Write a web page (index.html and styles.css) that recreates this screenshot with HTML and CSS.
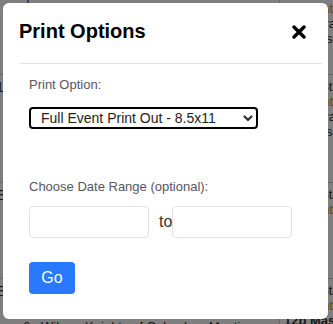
FILE: index.html
```html
<!DOCTYPE html>
<html lang="en">
<head>
  <meta charset="UTF-8">
  <title>Print Options</title>
  <link rel="stylesheet" href="styles.css">
</head>
<body>
  <div class="calendar">
    <div class="week first">
      <div class="day">
        <p class="event">12p Mass Intentions</p>
      </div>
      <div class="day side">
        <p class="event">6:30a Sta Prayer</p>
        <p class="event link">Mass Intentions</p>
        <p class="event">9a Adoration</p>
        <p class="event">12p Rosary</p>
      </div>
    </div>
    <div class="week">
      <div class="day"><span class="num">1</span></div>
      <div class="day side">
        <p class="event gap">6:30a Sta Prayer</p>
        <p class="event link">Mass Intentions</p>
        <p class="event">9a Adoration</p>
        <p class="event">12p Rosary</p>
      </div>
    </div>
    <div class="week short">
      <div class="day"><span class="num">E</span></div>
      <div class="day side">
        <p class="event gap">6:30a Sta Prayer</p>
        <p class="event link">Mass Intentions</p>
      </div>
    </div>
    <div class="week">
      <div class="day">
        <span class="num">E</span>
        <p class="event dot"><i></i>6p Wilmar Knights of Columbus Meeting</p>
      </div>
      <div class="day side">
        <p class="event gap">6:30a Sta Prayer</p>
        <p class="event link">Mass Intentions</p>
        <p class="event"><b>12p Mass</b></p>
      </div>
    </div>
  </div>

  <div class="backdrop">
    <div class="modal">
      <div class="modal-header">
        <h2>Print Options</h2>
        <button class="close" aria-label="Close">
          <svg width="14" height="14" viewBox="0 0 14 14">
            <path d="M2 2 L12 12 M12 2 L2 12" stroke="#000" stroke-width="3.4" stroke-linecap="round" fill="none"/>
          </svg>
        </button>
      </div>
      <div class="modal-body">
        <label class="field-label" for="printOption">Print Option:</label>
        <div class="select-wrap">
          <select id="printOption">
            <option>Full Event Print Out - 8.5x11</option>
            <option>Calendar Grid - 8.5x11</option>
            <option>Event List - 8.5x11</option>
          </select>
          <svg class="chevron" width="10" height="7" viewBox="0 0 10 7">
            <path d="M1.5 1.5 L5 5 L8.5 1.5" stroke="#333" stroke-width="2.2" stroke-linecap="round" stroke-linejoin="round" fill="none"/>
          </svg>
        </div>

        <label class="field-label range-label">Choose Date Range (optional):</label>
        <div class="range">
          <input type="text" class="date-input">
          <span class="to">to</span>
          <input type="text" class="date-input">
        </div>

        <button class="go">Go</button>
      </div>
    </div>
  </div>
</body>
</html>
```

FILE: styles.css
```css
body {
  margin: 0;
  font-family: "Liberation Sans", Arial, sans-serif;
  background: #fff;
  width: 333px;
  height: 324px;
  overflow: hidden;
  position: relative;
}

/* calendar behind the modal */
.calendar {
  margin-top: -14px;
}
.week {
  display: grid;
  grid-template-columns: 279px 54px;
  height: 107px;
  border-bottom: 1px solid #ccc;
}
.week.first {
  height: 88px;
}
.week.short {
  height: 95px;
}
.day {
  position: relative;
  padding: 0 0 0 12px;
  overflow: hidden;
}
.day.side {
  border-left: 1px solid #ccc;
  padding-left: 4px;
}
.event {
  margin: 0;
  font-size: 13px;
  line-height: 15px;
  color: #333;
  white-space: nowrap;
}
.event.gap {
  margin-top: 4px;
}
.event.link {
  color: #d98a1c;
}
.event.dot i {
  display: inline-block;
  width: 7px;
  height: 7px;
  border-radius: 50%;
  background: #e0c200;
  margin-right: 4px;
}
.week:first-child .day:first-child .event {
  margin-top: 2px;
}
.num {
  position: absolute;
  left: -4px;
  top: 4px;
  font-size: 14px;
  color: #333;
}
.week:last-child .day:first-child .event {
  margin-top: 40px;
}

.backdrop {
  position: absolute;
  inset: 0;
  background: rgba(0, 0, 0, 0.5);
  padding: 3px 5px 5px 3px;
}

.modal {
  background: #fff;
  border-radius: 6px;
  height: 316px;
  box-sizing: border-box;
}

.modal-header {
  display: flex;
  justify-content: space-between;
  align-items: center;
  margin: 0 6px 0 16px;
  padding: 17px 16px 20px 0;
  border-bottom: 1px solid #e5e5e5;
}
.modal-header h2 {
  margin: 0;
  font-size: 20px;
  line-height: 23px;
  font-weight: bold;
  color: #000;
}
.close {
  border: none;
  background: none;
  padding: 0;
  width: 14px;
  height: 14px;
  display: flex;
  cursor: pointer;
}

.modal-body {
  padding: 13px 26px 25px;
  display: flex;
  flex-direction: column;
  align-items: flex-start;
}
.field-label {
  font-size: 13px;
  line-height: 15px;
  color: #55555f;
}
.select-wrap {
  position: relative;
  margin-top: 15px;
}
select {
  appearance: none;
  width: 229px;
  height: 22px;
  border: 2px solid #000;
  border-radius: 4px;
  padding: 0 0 0 10px;
  font-family: inherit;
  font-size: 14px;
  color: #222;
  background: #fff;
}
.chevron {
  position: absolute;
  right: 5px;
  top: 8px;
}
.range-label {
  margin-top: 50px;
}
.range {
  display: flex;
  align-items: center;
  margin-top: 12px;
}
.date-input {
  width: 120px;
  height: 32px;
  box-sizing: border-box;
  border: 1px solid #e2e2e2;
  border-radius: 4px;
  font-size: 14px;
}
.to {
  font-size: 16px;
  color: #333;
  margin: 0 0 0 10px;
}
.go {
  margin-top: 24px;
  width: 46px;
  height: 32px;
  border: none;
  border-radius: 4px;
  background: #2979ff;
  color: #fff;
  font-family: inherit;
  font-size: 16px;
  cursor: pointer;
}
```
